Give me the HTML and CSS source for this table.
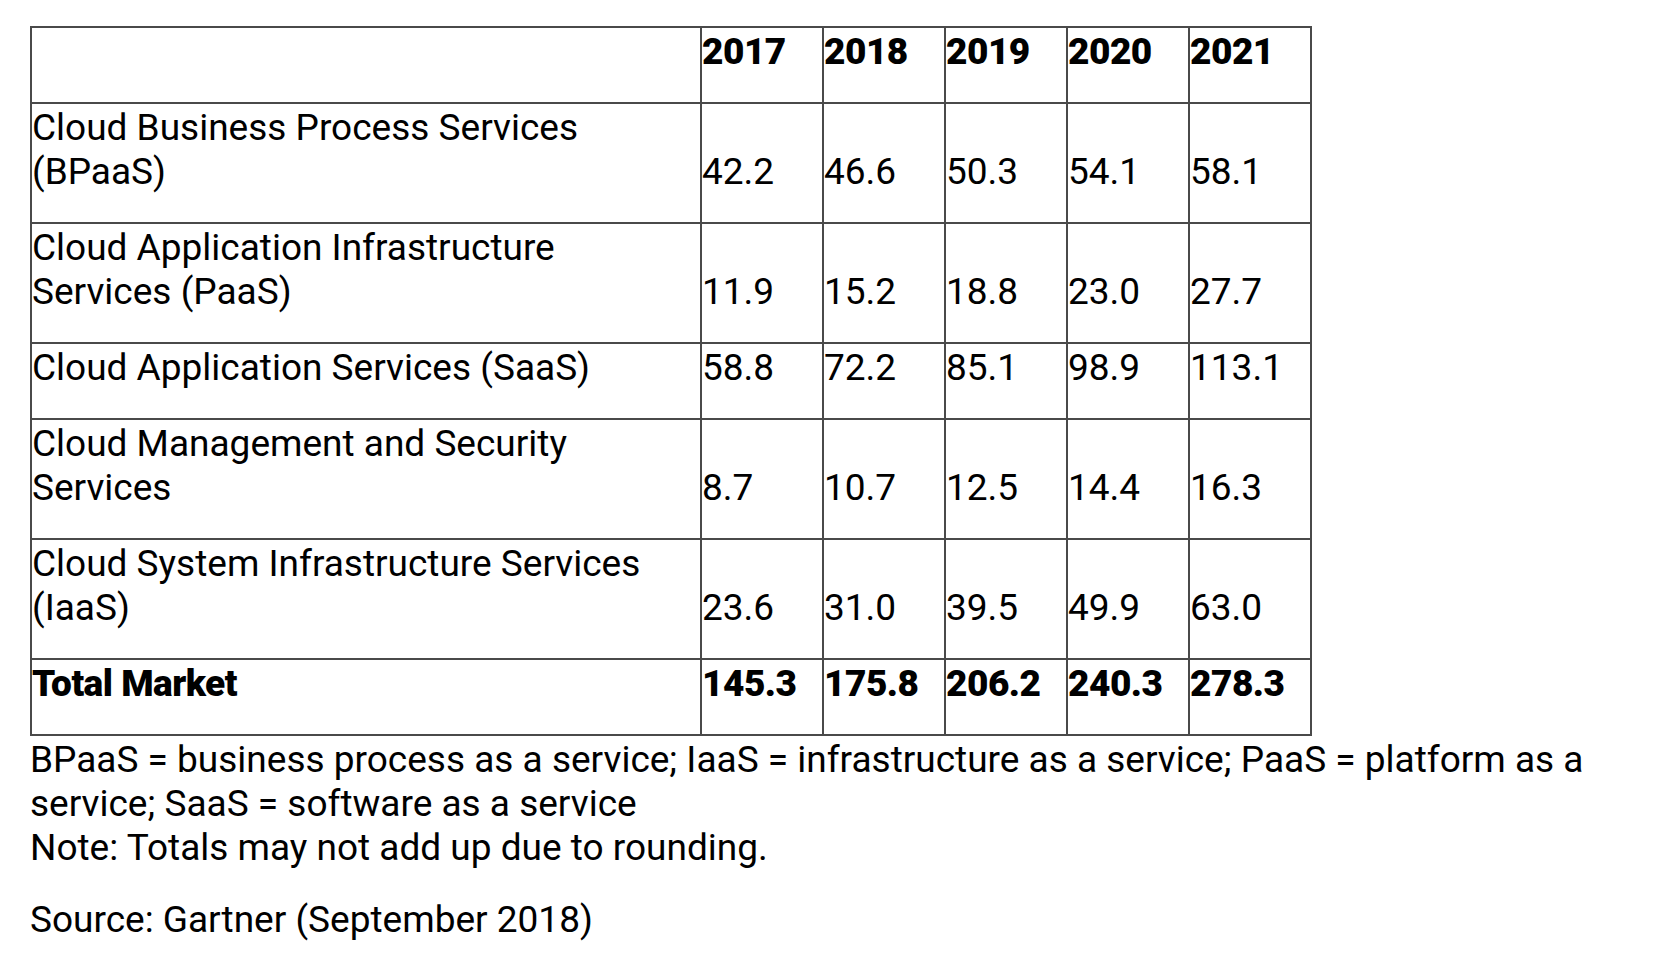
FILE: index.html
```html
<!DOCTYPE html>
<html lang="en">
<head>
<meta charset="utf-8">
<title>Public Cloud Service Revenue Forecast</title>
<link rel="stylesheet" href="styles.css">
</head>
<body>
<div class="page">
  <table class="forecast">
    <colgroup>
      <col class="col-label">
      <col class="col-year">
      <col class="col-year">
      <col class="col-year">
      <col class="col-year">
      <col class="col-year">
    </colgroup>
    <thead>
      <tr>
        <th></th>
        <th>2017</th>
        <th>2018</th>
        <th>2019</th>
        <th>2020</th>
        <th>2021</th>
      </tr>
    </thead>
    <tbody>
      <tr>
        <td>Cloud Business Process Services (BPaaS)</td>
        <td>42.2</td><td>46.6</td><td>50.3</td><td>54.1</td><td>58.1</td>
      </tr>
      <tr>
        <td>Cloud Application Infrastructure Services (PaaS)</td>
        <td>11.9</td><td>15.2</td><td>18.8</td><td>23.0</td><td>27.7</td>
      </tr>
      <tr>
        <td>Cloud Application Services (SaaS)</td>
        <td>58.8</td><td>72.2</td><td>85.1</td><td>98.9</td><td>113.1</td>
      </tr>
      <tr>
        <td>Cloud Management and Security Services</td>
        <td>8.7</td><td>10.7</td><td>12.5</td><td>14.4</td><td>16.3</td>
      </tr>
      <tr>
        <td>Cloud System Infrastructure Services (IaaS)</td>
        <td>23.6</td><td>31.0</td><td>39.5</td><td>49.9</td><td>63.0</td>
      </tr>
      <tr class="total">
        <td>Total Market</td>
        <td>145.3</td><td>175.8</td><td>206.2</td><td>240.3</td><td>278.3</td>
      </tr>
    </tbody>
  </table>
  <p class="note">BPaaS = business process as a service; IaaS = infrastructure as a service; PaaS = platform as a service; SaaS = software as a service<br>Note: Totals may not add up due to rounding.</p>
  <p class="source">Source: Gartner (September 2018)</p>
</div>
</body>
</html>
```

FILE: styles.css
```css
html, body {
  margin: 0;
  padding: 0;
  background: #ffffff;
}

body {
  font-family: Roboto, "Liberation Sans", Arial, sans-serif;
  font-size: 37px;
  line-height: 44px;
  color: #000000;
}

.page {
  padding: 26px 30px 0 30px;
}

.forecast {
  border-collapse: collapse;
  table-layout: fixed;
  width: 1280px;
}

.col-label {
  width: 670px;
}

.col-year {
  width: 122px;
}

.forecast th,
.forecast td {
  border: 2px solid #4a4a4a;
  padding: 2px 2px 28px 0;
  vertical-align: bottom;
  text-align: left;
  font-weight: 400;
  white-space: normal;
}

.forecast th {
  font-weight: 900;
  letter-spacing: -0.5px;
}

.forecast .total td {
  font-weight: 900;
  letter-spacing: -0.5px;
}

.note {
  margin: 2px 0 0 0;
  width: 1600px;
}

.source {
  margin: 28px 0 0 0;
}
```
